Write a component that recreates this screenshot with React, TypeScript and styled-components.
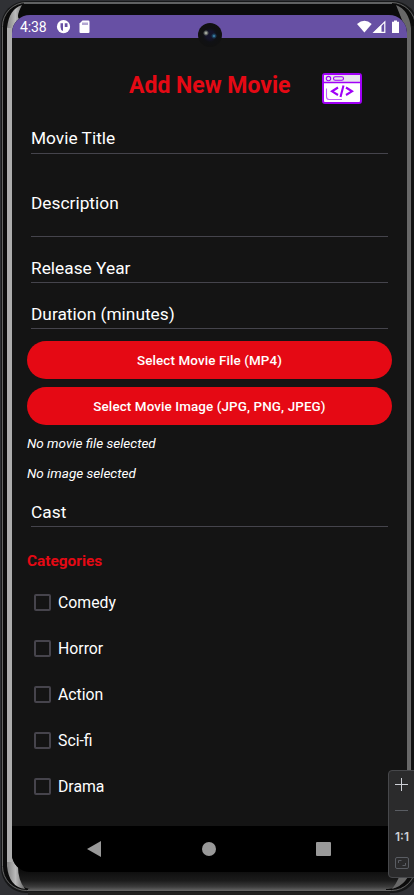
import React from "react";
import styled, { createGlobalStyle } from "styled-components";

const GlobalStyle = createGlobalStyle`
  * { box-sizing: border-box; }
  body { margin: 0; background: #303135; font-family: Roboto, "Liberation Sans", sans-serif; overflow: hidden; }
`;

const Emulator = styled.div`
  position: relative;
  width: 414px;
  height: 895px;
  padding: 15px 7px 23px 12px;
  overflow: hidden;
  background: #303135;
`;
const Chassis = styled.svg`
  position: absolute;
  inset: 0;
`;
const Screen = styled.div`
  position: relative;
  height: 857px;
  border-radius: 18px;
  overflow: hidden;
  background: #141414;
  display: flex;
  flex-direction: column;
`;
const StatusBar = styled.header`
  height: 23px;
  flex: none;
  background: #6750a4;
  color: #fff;
  display: flex;
  align-items: center;
  padding: 1px 6px 0 8px;
`;
const Clock = styled.span`
  width: 36px;
  font-size: 14px;
  line-height: 22px;
  letter-spacing: -0.1px;
`;
const StatusIcons = styled.svg<{ $right?: boolean }>`
  display: block;
  margin-left: ${(p) => (p.$right ? "auto" : "0")};
`;
const Camera = styled.div`
  position: absolute;
  left: 198px;
  top: 23px;
  width: 24px;
  height: 24px;
  border-radius: 50%;
  background:
    radial-gradient(circle at 8px 10px, #d0d4c4 0, #6a6f6c 1.5px, transparent 3px),
    radial-gradient(circle at 16px 13px, #4f9fd0 0, #1d4460 1.5px, transparent 3px),
    radial-gradient(circle at 12px 12px, #14142a 0 4px, #101114 7px, #111 12px);
`;
const Form = styled.main`
  flex: 1;
  padding: 0 15px;
  display: flex;
  flex-direction: column;
  color: #fff;
`;
const TitleRow = styled.div`
  height: 87px;
  padding: 35px 30px 0 102px;
  display: flex;
  align-items: flex-start;
  justify-content: space-between;
`;
const Title = styled.h1`
  margin: 0;
  color: #e50914;
  font-size: 23px;
  line-height: 26px;
  font-weight: 700;
  white-space: nowrap;
`;
const Field = styled.div<{ $h: number; $pb: number }>`
  height: ${(p) => p.$h}px;
  margin: 0 4px;
  padding-bottom: ${(p) => p.$pb}px;
  border-bottom: 1px solid #45444c;
  display: flex;
  align-items: flex-end;
  font-size: 17.3px;
  line-height: 20px;
  letter-spacing: 0.02px;
`;
const Buttons = styled.div`
  display: flex;
  flex-direction: column;
  gap: 8px;
  margin-top: 12px;
`;
const PillButton = styled.button`
  height: 38px;
  border: 0;
  padding: 0;
  border-radius: 19px;
  background: #e50914;
  color: #fff;
  font: 500 13.4px Roboto, sans-serif;
  letter-spacing: 0.12px;
`;
const FileNote = styled.p`
  margin: 0;
  height: 30px;
  line-height: 34px;
  font-size: 13.5px;
  font-style: italic;
`;
const FileNotes = styled.div`
  padding-top: 1px;
  margin-bottom: -1px;
`;
const SectionTitle = styled.h2`
  margin: 24px 0 8px;
  color: #e50914;
  font-size: 15.4px;
  line-height: 20px;
  font-weight: 700;
`;
const Option = styled.label`
  height: 46.15px;
  display: flex;
  align-items: center;
  gap: 7px;
  padding-left: 7px;
  font-size: 15.8px;
  line-height: 20px;
`;
const OptionText = styled.span`
  padding-top: 1px;
`;
const Box = styled.span`
  width: 17px;
  height: 17px;
  border: 2px solid #46444c;
  border-radius: 2px;
`;
const NavBar = styled.nav`
  height: 46px;
  flex: none;
  background: #000;
  display: flex;
  align-items: center;
  justify-content: space-between;
  padding: 0 76px 0 75px;
`;
const ZoomPanel = styled.aside`
  position: absolute;
  left: 388px;
  top: 770px;
  width: 30px;
  height: 108px;
  border: 1px solid #47484b;
  border-radius: 4px;
  background: #2b2b2c;
  color: #ced0d6;
  display: flex;
  flex-direction: column;
  align-items: flex-start;
`;
const PanelIcon = styled.svg`
  display: block;
  flex: none;
`;
const Ratio = styled.span`
  width: 26px;
  height: 26px;
  text-align: center;
  font: 600 12px/26px Inter, sans-serif;
`;

const fields = [
  { label: "Movie Title", h: 29, pb: 5 },
  { label: "Description", h: 83, pb: 23 },
  { label: "Release Year", h: 46, pb: 4 },
  { label: "Duration (minutes)", h: 46, pb: 4 },
];
const categories = ["Comedy", "Horror", "Action", "Sci-fi", "Drama"];

const PhoneChassis = () => (
  <Chassis width="414" height="895" viewBox="0 0 414 895" fill="none">
    <defs>
      <linearGradient id="base" x1="0" y1="870" x2="0" y2="889" gradientUnits="userSpaceOnUse">
        <stop stopColor="#0c0c0c" />
        <stop offset=".55" stopColor="#1b1b1b" />
        <stop offset=".85" stopColor="#383838" />
        <stop offset="1" stopColor="#505050" />
      </linearGradient>
      <linearGradient id="shine" x1="8" y1="0" x2="23" y2="0" gradientUnits="userSpaceOnUse">
        <stop stopColor="#888" />
        <stop offset=".5" stopColor="#bbb" />
        <stop offset="1" stopColor="#777" />
      </linearGradient>
    </defs>
    <rect x="1" y="1" width="417" height="892" rx="25" fill="#171819" />
    <rect x="2.5" y="2.5" width="413" height="888" rx="24" fill="#0b0b0b" stroke="#666" />
    <path d="M24 3H392" stroke="#606162" strokeWidth="2" />
    <path d="M12 850H407V878Q400 889 388 889H30Q14 886 12 870Z" fill="url(#base)" />
    <path d="M28 889.5H386" stroke="#595959" strokeWidth="1.5" />
    <path d="M28 893.5H390" stroke="#202020" strokeWidth="3" />
    <path d="M7 28Q9 9 22 5Q16 16 19 19L12 33V857L18 867Q18 880 25 889Q9 887 7 866Z" fill="url(#shine)" />
    <path d="M7 28H12V862H7Z" fill="#adadad" />
    <path d="M396 5Q409 10 411 28V866Q409 884 392 889Q400 879 401 868L407 857V31L402 20Z" fill="#686868" />
    <path d="M412.5 26V868" stroke="#111" strokeWidth="3" />
  </Chassis>
);

const BrowserCodeIcon = () => (
  <svg width="40" height="32" viewBox="0 0 40 32" fill="none" stroke="#a100f7" strokeLinejoin="round">
    <rect x="1" y="1" width="38" height="29" rx="2" fill="#fff" strokeWidth="2" />
    <path d="M2 2H38V9.5H2Z" fill="#e8e3ed" stroke="none" />
    <path d="M1 9.5H39" strokeWidth="1.3" />
    <circle cx="6.5" cy="5.6" r="2.2" strokeWidth="1.1" />
    <rect x="11.5" y="3.8" width="10" height="3.5" rx="1.75" strokeWidth="1.1" />
    <path d="M4.5 15.5V23.5Q4.5 26.5 7 26.5H20" strokeWidth="1.1" opacity=".65" />
    <path d="M16 14.5L10 18.3L16 22M24 14.5L30 18.3L24 22M21.5 12.5L18.5 24" strokeWidth="2.1" strokeLinejoin="miter" />
  </svg>
);

export default function App() {
  return (
    <Emulator>
      <GlobalStyle />
      <PhoneChassis />
      <Screen>
        <StatusBar>
          <Clock>4:38</Clock>
          <StatusIcons width="36" height="16" viewBox="0 0 36 16" fill="#fff">
            <circle cx="7.5" cy="7.7" r="6.6" />
            <path d="M4.5 4.2H7V12Q4.5 11 4.5 8ZM8.5 4.2H11.5V8H8.5Z" fill="#6750a4" />
            <path d="M7 4H8.5V13H7Z" />
            <path d="M26.5 1.5H32.3Q33.5 1.5 33.5 2.7V13Q33.5 14 32.5 14H24.5Q23.5 14 23.5 13V4.5Z" />
            <path d="M27 3.5V6M29 3.5V6M31 3.5V6" stroke="#6750a4" />
          </StatusIcons>
          <StatusIcons $right width="44" height="16" viewBox="0 0 44 16" fill="#fff">
            <path d="M0 5Q7.5 -1.4 14.7 5L7.4 13.5Z" />
            <path d="M27.8 2.8V13.3H17Z" fill="none" stroke="#fff" strokeWidth="1.2" />
            <path d="M16.5 13.8L24.5 5.8V13.8Z" />
            <path d="M37 1.5H40V2.7H42V14H35V2.7H37Z" />
          </StatusIcons>
        </StatusBar>
        <Form>
          <TitleRow>
            <Title>Add New Movie</Title>
            <BrowserCodeIcon />
          </TitleRow>
          {fields.map((f) => (
            <Field key={f.label} $h={f.h} $pb={f.pb}>{f.label}</Field>
          ))}
          <Buttons>
            <PillButton>Select Movie File (MP4)</PillButton>
            <PillButton>Select Movie Image (JPG, PNG, JPEG)</PillButton>
          </Buttons>
          <FileNotes>
            <FileNote>No movie file selected</FileNote>
            <FileNote>No image selected</FileNote>
          </FileNotes>
          <Field $h={42} $pb={4}>Cast</Field>
          <SectionTitle>Categories</SectionTitle>
          {categories.map((c) => (
            <Option key={c}><Box /><OptionText>{c}</OptionText></Option>
          ))}
        </Form>
        <NavBar>
          <svg width="14" height="16" viewBox="0 0 14 16"><path d="M14 0V16L0 8Z" fill="#999" /></svg>
          <svg width="14" height="14" viewBox="0 0 14 14"><circle cx="7" cy="7" r="7" fill="#999" /></svg>
          <svg width="15" height="14" viewBox="0 0 15 14"><rect width="15" height="14" rx="1" fill="#999" /></svg>
        </NavBar>
      </Screen>
      <Camera />
      <ZoomPanel>
        <PanelIcon width="26" height="53" viewBox="0 0 26 53" fill="none">
          <path d="M6 13.5H19M12.5 7V20" stroke="#ced0d6" />
          <path d="M6 39.5H19" stroke="#5a5d63" />
        </PanelIcon>
        <Ratio>1:1</Ratio>
        <PanelIcon width="26" height="27" viewBox="0 0 26 27" fill="none" stroke="#5a5d63">
          <rect x="6.5" y="7.5" width="13" height="11" rx="1.5" />
          <path d="M9.5 13V10.5H12.5M13.5 15.5H16.5V13" />
        </PanelIcon>
      </ZoomPanel>
    </Emulator>
  );
}
